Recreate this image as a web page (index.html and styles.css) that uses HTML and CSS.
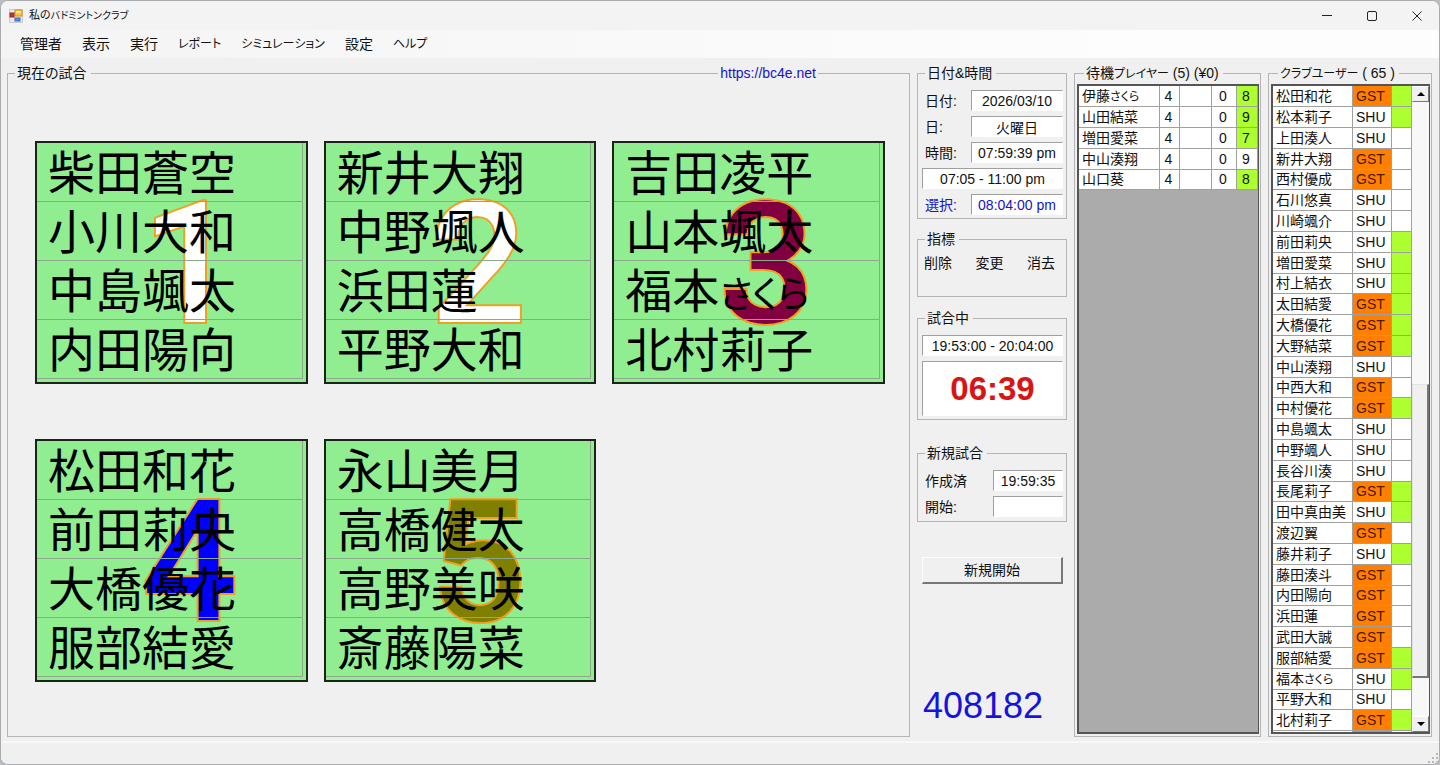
FILE: index.html
```html
<!DOCTYPE html>
<html lang="ja">
<head>
<meta charset="utf-8">
<meta name="viewport" content="width=device-width, initial-scale=1">
<title>私のバドミントンクラブ</title>
<link rel="stylesheet" href="styles.css">
</head>
<body>
<div class="window">
  <header class="titlebar">
    <svg class="app-icon" viewBox="0 0 14 14" aria-hidden="true">
      <rect x="0.5" y="0.5" width="13" height="13" fill="#e9e9ea" stroke="#c9cbd0"/>
      <rect x="6" y="1" width="7" height="6" fill="#f7c83a" stroke="#c99a1c"/>
      <rect x="7" y="2" width="5" height="2" fill="#ffe58a"/>
      <rect x="1" y="4" width="4" height="4" fill="#c8372d" stroke="#9d2a22"/>
      <rect x="6" y="9" width="5" height="3" fill="#5b8fe0" stroke="#3c69b8"/>
    </svg>
    <h1 class="title">私の<span class="title-kana">バドミントンクラブ</span></h1>
    <div class="window-buttons">
      <button type="button" aria-label="最小化"><svg viewBox="0 0 12 12"><path d="M1 5.5h10"/></svg></button>
      <button type="button" aria-label="最大化"><svg viewBox="0 0 12 12"><rect x="1.5" y="1.5" width="9" height="9" rx="1.5"/></svg></button>
      <button type="button" aria-label="閉じる"><svg viewBox="0 0 12 12"><path d="M1.5 1.5l9 9M10.5 1.5l-9 9"/></svg></button>
    </div>
  </header>

  <nav class="menubar">
    <button type="button">管理者</button>
    <button type="button">表示</button>
    <button type="button">実行</button>
    <button type="button" class="kana">レポート</button>
    <button type="button" class="kana">シミュレーション</button>
    <button type="button">設定</button>
    <button type="button" class="kana">ヘルプ</button>
  </nav>

  <main class="content">
    <fieldset class="group matches">
      <legend>現在の試合</legend>
      <a class="site-link" href="https://bc4e.net">https://bc4e.net</a>
      <div class="courts">
        <section class="court">
          <span class="number number-white">1</span>
          <ul><li>柴田蒼空</li><li>小川大和</li><li>中島颯太</li><li>内田陽向</li></ul>
        </section>
        <section class="court">
          <span class="number number-white">2</span>
          <ul><li>新井大翔</li><li>中野颯人</li><li>浜田蓮</li><li>平野大和</li></ul>
        </section>
        <section class="court">
          <span class="number number-maroon">3</span>
          <ul><li>吉田凌平</li><li>山本颯太</li><li>福本<span class="name-kana">さくら</span></li><li>北村莉子</li></ul>
        </section>
        <section class="court">
          <span class="number number-blue">4</span>
          <ul><li>松田和花</li><li>前田莉央</li><li>大橋優花</li><li>服部結愛</li></ul>
        </section>
        <section class="court">
          <span class="number number-olive">5</span>
          <ul><li>永山美月</li><li>高橋健太</li><li>高野美咲</li><li>斎藤陽菜</li></ul>
        </section>
      </div>
    </fieldset>

    <div class="side">
      <fieldset class="group">
        <legend>日付&amp;時間</legend>
        <div class="fields">
          <div class="field"><label for="date">日付:</label><input id="date" type="text" value="2026/03/10" readonly></div>
          <div class="field"><label for="day">日:</label><input id="day" type="text" value="火曜日" readonly></div>
          <div class="field"><label for="time">時間:</label><input id="time" type="text" value="07:59:39 pm" readonly></div>
          <input class="wide" type="text" aria-label="時間帯" value="07:05 - 11:00 pm" readonly>
          <div class="field selected"><label for="pick">選択:</label><input id="pick" type="text" value="08:04:00 pm" readonly></div>
        </div>
      </fieldset>

      <fieldset class="group marks">
        <legend>指標</legend>
        <div class="mark-actions">
          <button type="button">削除</button>
          <button type="button">変更</button>
          <button type="button">消去</button>
        </div>
      </fieldset>

      <fieldset class="group playing">
        <legend>試合中</legend>
        <div class="fields">
          <input class="wide" type="text" aria-label="試合時間" value="19:53:00 - 20:04:00" readonly>
          <input class="wide countdown" type="text" aria-label="残り時間" value="06:39" readonly>
        </div>
      </fieldset>

      <fieldset class="group next-match">
        <legend>新規試合</legend>
        <div class="fields">
          <div class="field short"><label for="made">作成済</label><input id="made" type="text" value="19:59:35" readonly></div>
          <div class="field short"><label for="start">開始:</label><input id="start" type="text"></div>
        </div>
      </fieldset>

      <button type="button" class="start-button">新規開始</button>
      <output class="counter">408182</output>
    </div>

    <fieldset class="group list">
      <legend>待機<span class="kana">プレイヤー</span> (5) (¥0)</legend>
      <div class="grid-box waiting">
        <table>
          <colgroup><col><col class="w-level"><col class="w-blank"><col class="w-count"><col class="w-rank"></colgroup>
          <tbody>
            <tr><td>伊藤<span class="kana">さくら</span></td><td class="num">4</td><td></td><td class="num">0</td><td class="num on">8</td></tr>
            <tr><td>山田結菜</td><td class="num">4</td><td></td><td class="num">0</td><td class="num on">9</td></tr>
            <tr><td>増田愛菜</td><td class="num">4</td><td></td><td class="num">0</td><td class="num on">7</td></tr>
            <tr><td>中山湊翔</td><td class="num">4</td><td></td><td class="num">0</td><td class="num">9</td></tr>
            <tr><td>山口葵</td><td class="num">4</td><td></td><td class="num">0</td><td class="num on">8</td></tr>
          </tbody>
        </table>
      </div>
    </fieldset>

    <fieldset class="group list">
      <legend><span class="kana">クラブユーザー</span> ( 65 )</legend>
      <div class="grid-box users">
        <div class="rows">
        <table>
          <colgroup><col><col class="w-type"><col class="w-flag"></colgroup>
          <tbody>
            <tr><td>松田和花</td><td class="gst">GST</td><td class="on"></td></tr>
            <tr><td>松本莉子</td><td>SHU</td><td class="on"></td></tr>
            <tr><td>上田湊人</td><td>SHU</td><td></td></tr>
            <tr><td>新井大翔</td><td class="gst">GST</td><td></td></tr>
            <tr><td>西村優成</td><td class="gst">GST</td><td></td></tr>
            <tr><td>石川悠真</td><td>SHU</td><td></td></tr>
            <tr><td>川崎颯介</td><td>SHU</td><td></td></tr>
            <tr><td>前田莉央</td><td>SHU</td><td class="on"></td></tr>
            <tr><td>増田愛菜</td><td>SHU</td><td class="on"></td></tr>
            <tr><td>村上結衣</td><td>SHU</td><td class="on"></td></tr>
            <tr><td>太田結愛</td><td class="gst">GST</td><td class="on"></td></tr>
            <tr><td>大橋優花</td><td class="gst">GST</td><td class="on"></td></tr>
            <tr><td>大野結菜</td><td class="gst">GST</td><td class="on"></td></tr>
            <tr><td>中山湊翔</td><td>SHU</td><td></td></tr>
            <tr><td>中西大和</td><td class="gst">GST</td><td></td></tr>
            <tr><td>中村優花</td><td class="gst">GST</td><td class="on"></td></tr>
            <tr><td>中島颯太</td><td>SHU</td><td></td></tr>
            <tr><td>中野颯人</td><td>SHU</td><td></td></tr>
            <tr><td>長谷川湊</td><td>SHU</td><td></td></tr>
            <tr><td>長尾莉子</td><td class="gst">GST</td><td class="on"></td></tr>
            <tr><td>田中真由美</td><td>SHU</td><td class="on"></td></tr>
            <tr><td>渡辺翼</td><td class="gst">GST</td><td></td></tr>
            <tr><td>藤井莉子</td><td>SHU</td><td class="on"></td></tr>
            <tr><td>藤田湊斗</td><td class="gst">GST</td><td></td></tr>
            <tr><td>内田陽向</td><td class="gst">GST</td><td></td></tr>
            <tr><td>浜田蓮</td><td class="gst">GST</td><td></td></tr>
            <tr><td>武田大誠</td><td class="gst">GST</td><td></td></tr>
            <tr><td>服部結愛</td><td class="gst">GST</td><td class="on"></td></tr>
            <tr><td>福本<span class="kana">さくら</span></td><td>SHU</td><td class="on"></td></tr>
            <tr><td>平野大和</td><td>SHU</td><td></td></tr>
            <tr><td>北村莉子</td><td class="gst">GST</td><td class="on"></td></tr>
            <tr><td>&nbsp;</td><td class="gst"></td><td></td></tr>
          </tbody>
        </table>
        </div>
        <div class="scrollbar">
          <button type="button" aria-label="上へ"><svg viewBox="0 0 8 4"><path d="M0 4L4 0l4 4z"/></svg></button>
          <div class="track"><div class="thumb"></div></div>
          <button type="button" aria-label="下へ"><svg viewBox="0 0 8 4"><path d="M0 0l4 4 4-4z"/></svg></button>
        </div>
      </div>
    </fieldset>
  </main>

  <footer class="statusbar">
    <svg class="grip" viewBox="0 0 12 12" aria-hidden="true">
      <path d="M9 1h2v2H9zM5 5h2v2H5zM9 5h2v2H9zM1 9h2v2H1zM5 9h2v2H5zM9 9h2v2H9z"/>
    </svg>
  </footer>
</div>
</body>
</html>
```
FILE: styles.css
```css
* {
  box-sizing: border-box;
}

body {
  margin: 0;
  background: #b9bdc2;
  color: #111;
  font: 14px/16px "Liberation Sans", "Noto Sans CJK JP", sans-serif;
  font-feature-settings: "palt";
}

button,
input {
  font: inherit;
  font-feature-settings: inherit;
  color: inherit;
}

button {
  padding: 0;
  border: 0;
  background: none;
}

.window {
  display: flex;
  flex-direction: column;
  height: 100vh;
  border: 1px solid #a9abad;
  border-radius: 8px;
  background: #f0f0f0;
  overflow: hidden;
}

.titlebar {
  display: flex;
  align-items: center;
  flex: none;
  height: 29px;
  padding-left: 8px;
  background: #f3f3f3;
}

.app-icon {
  width: 14px;
  height: 14px;
}

.title {
  flex: 1;
  margin: 0 0 0 6px;
  font-size: 11px;
  font-weight: 400;
}

.title-kana {
  font-size: 10px;
}

.window-buttons {
  display: flex;
}

.window-buttons button {
  width: 45px;
  height: 28px;
}

.window-buttons svg {
  display: block;
  width: 12px;
  height: 12px;
  margin: auto;
  fill: none;
  stroke: #222;
}

.menubar {
  display: flex;
  align-items: center;
  flex: none;
  gap: 20px;
  height: 28px;
  padding-left: 19px;
  background: linear-gradient(90deg, #f4f4f4, #fdfdfd 80%);
}

.kana {
  font-size: 12px;
}

.content {
  display: grid;
  grid-template-columns: 1fr 150px 187px 164px;
  grid-template-rows: minmax(0, 1fr);
  gap: 7px;
  flex: 1;
  min-height: 0;
  padding: 7px 7px 4px 6px;
}

.group {
  position: relative;
  display: flex;
  flex-direction: column;
  min-width: 0;
  min-height: 0;
  margin: 0;
  padding: 0;
  border: 1px solid #b4b4b4;
}

.group > legend {
  margin-left: 7px;
  padding: 0 4px 0 2px;
}

.site-link {
  position: absolute;
  top: -16px;
  right: 91px;
  padding: 0 2px;
  background: #f0f0f0;
  color: #1414c8;
  text-decoration: none;
}

.courts {
  display: grid;
  grid-template-columns: repeat(3, 1fr);
  gap: 55px 16px;
  padding: 60px 24px 0 27px;
}

.court {
  position: relative;
  padding: 0 3px 3px 0;
  border: 2px solid #1b231b;
  background: #90ee90;
}

.court ul {
  position: relative;
  margin: 0;
  padding: 0;
  border-right: 1px solid #8aa88a;
  list-style: none;
}

.court li {
  height: 59px;
  padding: 4px 0 0 11px;
  border-bottom: 1px solid #8aa88a;
  font-size: 47px;
  line-height: 54px;
  white-space: nowrap;
  color: #000;
}

.name-kana {
  font-size: 37px;
}

.number {
  position: absolute;
  top: 38px;
  left: 105px;
  font-family: Roboto, "Liberation Sans", sans-serif;
  font-size: 168px;
  font-weight: 500;
  line-height: 168px;
  -webkit-text-stroke: 4px #f0a020;
  paint-order: stroke fill;
}

.number-white {
  color: #fff;
}

.number-maroon {
  color: #800040;
}

.number-blue {
  color: #0000ff;
}

.number-olive {
  color: #808000;
}

.side {
  display: flex;
  flex-direction: column;
  min-width: 0;
}

.fields {
  display: flex;
  flex-direction: column;
  gap: 5px;
  padding: 9px 3px 3px 4px;
}

.field {
  display: flex;
  align-items: center;
  justify-content: space-between;
  padding-left: 3px;
}

.field input {
  width: 92px;
}

.field.short input {
  width: 70px;
}

.fields input {
  min-width: 0;
  height: 21px;
  padding: 1px 0 0;
  border: 1px solid #fff;
  border-top-color: #a0a0a0;
  border-left-color: #a0a0a0;
  border-radius: 0;
  background: #fff;
  text-align: center;
}

.fields .wide {
  width: 100%;
}

.selected {
  color: #1414c8;
}

.marks {
  height: 66px;
  margin-top: 12px;
}

.mark-actions {
  display: flex;
  justify-content: space-between;
  padding: 8px 11px 0 6px;
}

.playing {
  margin-top: 13px;
}

.fields .countdown {
  height: 55px;
  color: #d81414;
  font-size: 33px;
  font-weight: 700;
}

.next-match {
  margin-top: 25px;
  padding-bottom: 1px;
}

.start-button {
  flex: none;
  height: 27px;
  margin: 35px 4px 0 5px;
  border: 1px solid #fff;
  border-right: 2px solid #777;
  border-bottom: 2px solid #777;
  background: #f0f0f0;
}

.counter {
  margin: auto 0 13px 6px;
  color: #1414dc;
  font-size: 36px;
  line-height: 36px;
}

.list {
  padding: 2px 1px 2px 2px;
}

.grid-box {
  display: flex;
  flex: 1;
  min-height: 0;
  border: 2px solid #555;
  border-right-width: 1px;
  background: #ababab;
  overflow: hidden;
}

.waiting {
  align-items: flex-start;
}

.rows {
  flex: 1;
  min-width: 0;
  min-height: 0;
  overflow: hidden;
}

table {
  width: 100%;
  table-layout: fixed;
  border-spacing: 0;
}

td {
  height: 21px;
  padding: 0 0 0 3px;
  border-right: 1px solid #a0a0a0;
  border-bottom: 1px solid #a0a0a0;
  background: #fff;
  line-height: 20px;
  white-space: nowrap;
  overflow: hidden;
}

td .kana {
  line-height: 16px;
}

/* Four 21px rows and one 20px row per block of five. */
tr:nth-child(5n) td {
  height: 20px;
  line-height: 19px;
}

.num {
  padding: 0 2px 0 0;
  text-align: center;
}

.on {
  background: #adff2f;
}

.gst {
  background: #ff8000;
  color: #4a1800;
}

.w-level {
  width: 20px;
}

.w-blank {
  width: 32px;
}

.w-count {
  width: 25px;
}

.w-rank {
  width: 21px;
}

.w-type {
  width: 39px;
}

.w-flag {
  width: 20px;
}

.scrollbar {
  display: flex;
  flex-direction: column;
  flex: none;
  width: 17px;
  background: #f8f8f8;
}

.scrollbar button {
  flex: none;
  height: 16px;
  border: 1px solid #fff;
  border-right-color: #777;
  border-bottom-color: #777;
  background: #f0f0f0;
}

.scrollbar svg {
  display: block;
  width: 8px;
  height: 4px;
  margin: auto;
}

.track {
  display: flex;
  flex-direction: column;
  flex: 1;
}

.track::before {
  content: "";
  flex: 284;
}

.track::after {
  content: "";
  flex: 38;
}

.thumb {
  flex: 294;
  border: 1px solid #e3e3e3;
  border-right: 2px solid #777;
  border-bottom: 2px solid #777;
  background: #f0f0f0;
}

.statusbar {
  display: flex;
  align-items: flex-end;
  justify-content: flex-end;
  flex: none;
  height: 23px;
  border-top: 2px solid #f8f8f8;
  background: #f0f0f0;
}

.grip {
  width: 12px;
  height: 12px;
  fill: #b8b8b8;
}
```
